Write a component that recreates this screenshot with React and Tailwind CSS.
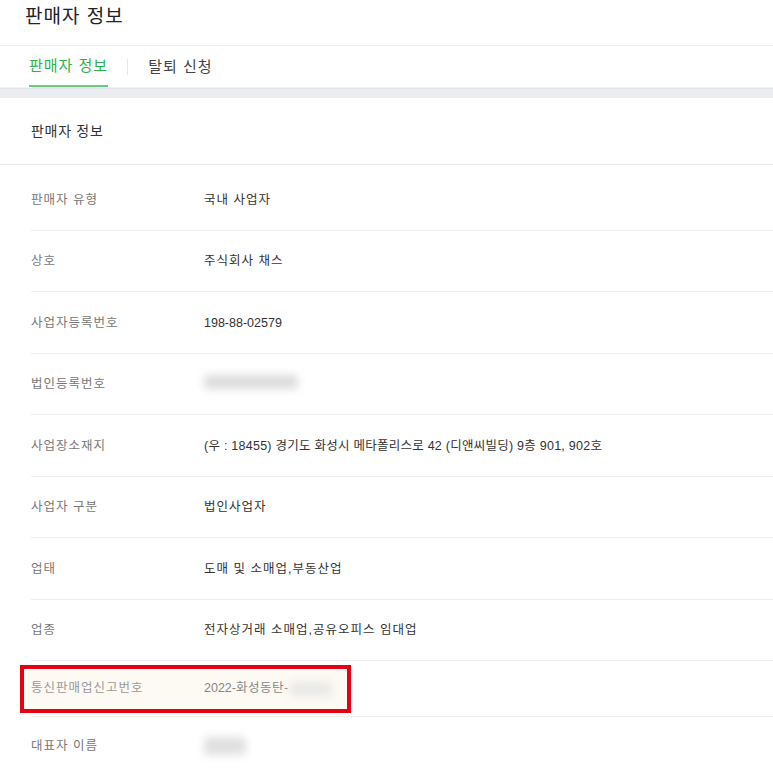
const FONT = "font-['Liberation_Sans','Noto_Sans_CJK_KR',sans-serif]"

const ROWS = [
  { label: '판매자 유형', value: '국내 사업자' },
  { label: '상호', value: '주식회사 채스' },
  { label: '사업자등록번호', value: '198-88-02579', latin: true },
  { label: '법인등록번호', blur: 'w-[94px]' },
  { label: '사업장소재지', value: '(우 : 18455) 경기도 화성시 메타폴리스로 42 (디앤씨빌딩) 9층 901, 902호', address: true },
  { label: '사업자 구분', value: '법인사업자' },
  { label: '업태', value: '도매 및 소매업,부동산업' },
  { label: '업종', value: '전자상거래 소매업,공유오피스 임대업' },
]

function Blur({ className }) {
  return <span className={`inline-block rounded-sm blur-[4px] ${className}`} />
}

export default function App() {
  return (
    <div className={`min-h-[774px] bg-white ${FONT}`}>
      <div className="h-[46px] border-b border-[#ececec] px-[25px] pt-[4px]">
        <h1 className="text-[19px] leading-[26px] tracking-[1px] text-[#222]">판매자 정보</h1>
      </div>

      <div className="flex h-[42px] items-stretch border-b border-[#f3f3f3] px-[29px]">
        <div className="flex items-center border-b-2 border-[#6acb7f] pt-[2px] text-[15px] tracking-[1px] text-[#2db24c]">판매자 정보</div>
        <div className="ml-[19px] mr-[20px] my-auto h-[16px] w-px bg-[#e6e6e6]" />
        <div className="flex items-center pt-[2px] text-[15px] tracking-[1px] text-[#444]">탈퇴 신청</div>
      </div>

      <div className="h-[10px] border-t border-[#e3e5e8] bg-[#ebedf0]" />

      <div className="flex h-[67px] items-center border-b border-[#eaeaea] px-[31px] text-[14px] tracking-[0.7px] text-[#333]">판매자 정보</div>

      <div className="pl-[31px] pt-[4px] text-[12.5px]">
        {ROWS.map((r) => (
          <div key={r.label} className="flex h-[61.5px] items-center border-b border-[#eeeeee] pt-[2px]">
            <div className="w-[173px] tracking-[1px] text-[#777]">{r.label}</div>
            <div className={`text-[#333] ${r.latin ? '' : r.address ? 'tracking-[0.25px]' : 'tracking-[1px]'}`}>
              {r.blur ? <Blur className={`h-[14px] bg-[#dcdcdc] ${r.blur}`} /> : r.value}
            </div>
          </div>
        ))}

        <div className="relative flex h-[56px] items-center border-b border-[#eeeeee]">
          <div className="absolute left-[-11px] top-[4px] h-[48px] w-[331px] border-4 border-[#e50012] bg-[#fdfaf3]" />
          <div className="relative w-[173px] tracking-[1px] text-[#999]">통신판매업신고번호</div>
          <div className="relative flex items-center text-[#888]">
            <span>2022-<span className="tracking-[0.5px]">화성동탄</span>-</span>
            <Blur className="ml-[2px] h-[14px] w-[42px] bg-[#e8e8e8]" />
          </div>
        </div>

        <div className="flex h-[58px] items-center">
          <div className="w-[173px] tracking-[1px] text-[#777]">대표자 이름</div>
          <Blur className="h-[18px] w-[42px] bg-[#e0e0e0]" />
        </div>
      </div>
    </div>
  )
}
